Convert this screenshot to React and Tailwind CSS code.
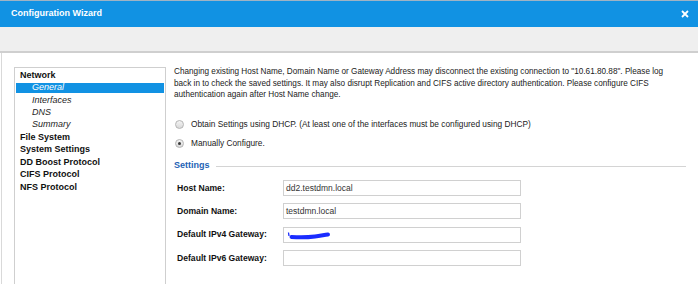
import React from 'react';

const navItems = [
  { label: 'Network', bold: true },
  { label: 'General', sub: true, selected: true },
  { label: 'Interfaces', sub: true },
  { label: 'DNS', sub: true },
  { label: 'Summary', sub: true },
  { label: 'File System', bold: true },
  { label: 'System Settings', bold: true },
  { label: 'DD Boost Protocol', bold: true },
  { label: 'CIFS Protocol', bold: true },
  { label: 'NFS Protocol', bold: true },
];

const fields = [
  { label: 'Host Name:', value: 'dd2.testdmn.local' },
  { label: 'Domain Name:', value: 'testdmn.local' },
  { label: 'Default IPv4 Gateway:', value: '', masked: true },
  { label: 'Default IPv6 Gateway:', value: '' },
];

const Radio = ({ checked }) => (
  <span className="relative w-[9px] h-[9px] rounded-full border border-[#b5b5b5] bg-gradient-to-b from-[#f4f4f4] to-[#d9d9d9] flex items-center justify-center">
    {checked && <span className="w-[3px] h-[3px] rounded-full bg-[#3a3a3a]" />}
  </span>
);

const App = () => {
  return (
    <div className="w-[698px] h-[284px] overflow-hidden bg-white font-['Liberation_Sans',Arial,sans-serif] text-[#1e1e1e] flex flex-col">
      {/* title bar */}
      <div className="h-px bg-[#9fb3c4]" />
      <div className="h-[26px] bg-[#1192e3] flex items-center justify-between pl-[11px] pr-[8px]">
        <span className="text-white font-bold text-[9px]">Configuration Wizard</span>
        <svg width="8" height="8" viewBox="0 0 8 8" className="mr-[1px]">
          <path d="M1 1L7 7M7 1L1 7" stroke="white" strokeWidth="1.8" />
        </svg>
      </div>
      <div className="h-[26px] bg-[#efefef] border-b-2 border-[#cfcfcf]" />

      <div className="flex-1 flex ml-px border-l border-[#d9d9d9]">
        {/* left nav */}
        <div className="ml-[12px] mt-[14px] w-[152px] border border-b-0 border-[#cfcfcf] pt-[1px]">
          {navItems.map((item) => (
            <div key={item.label} className="h-[12.45px] flex items-center px-px">
              <div
                className={`h-[10px] w-full flex items-center text-[9px] leading-none ${
                  item.selected ? 'bg-[#1192e3] text-white' : ''
                } ${item.sub ? 'italic pl-[16px]' : 'font-bold pl-[4px] text-[#111]'}`}
              >
                {item.label}
              </div>
            </div>
          ))}
        </div>

        {/* right content */}
        <div className="flex-1 pl-[8px] pr-[12px] pt-[13px] text-[9px]">
          <p className="leading-[11.7px] text-[#222] text-[8.2px] whitespace-nowrap">
            Changing existing Host Name, Domain Name or Gateway Address may disconnect the existing connection to "10.61.80.88". Please log
            <br />
            back in to check the saved settings. It may also disrupt Replication and CIFS active directory authentication. Please configure CIFS
            <br />
            authentication again after Host Name change.
          </p>

          <div className="mt-[17px] flex items-center gap-[7px] pl-[1px] h-[12px] text-[8.3px]">
            <Radio />
            <span className="text-[#222]">Obtain Settings using DHCP. (At least one of the interfaces must be configured using DHCP)</span>
          </div>
          <div className="mt-[7px] flex items-center gap-[7px] pl-[1px] h-[12px] text-[8.3px]">
            <Radio checked />
            <span className="text-[#222]">Manually Configure.</span>
          </div>

          <div className="mt-[11px] flex items-center gap-[6px] h-[12px]">
            <span className="font-bold text-[#1d62b5]">Settings</span>
            <div className="flex-1 h-px bg-[#d4d4d4]" />
          </div>

          <div className="mt-[8px] flex flex-col gap-[7.3px] pl-[3px]">
            {fields.map((f) => (
              <div key={f.label} className="flex items-center h-[16px]">
                <span className="w-[106px] font-bold text-[8.6px] text-[#111]">{f.label}</span>
                <div className="relative w-[238px] h-[16px] border border-[#d0d0d0] flex items-center pl-[2px] text-[8.5px] text-[#333]">
                  {f.value}
                  {f.masked && (
                    <svg className="absolute left-[3px] top-[3px]" width="44" height="10" viewBox="0 0 44 10">
                      <path d="M1.5 1.5L2 5" stroke="#1a2cff" strokeWidth="1.3" />
                      <path d="M4.5 6C12 6.5 20 6.5 28 5.5C33 5 37 4 41 3.5" stroke="#1a2cff" strokeWidth="4" fill="none" strokeLinecap="round" />
                    </svg>
                  )}
                </div>
              </div>
            ))}
          </div>
        </div>
      </div>
    </div>
  );
};

export default App;
